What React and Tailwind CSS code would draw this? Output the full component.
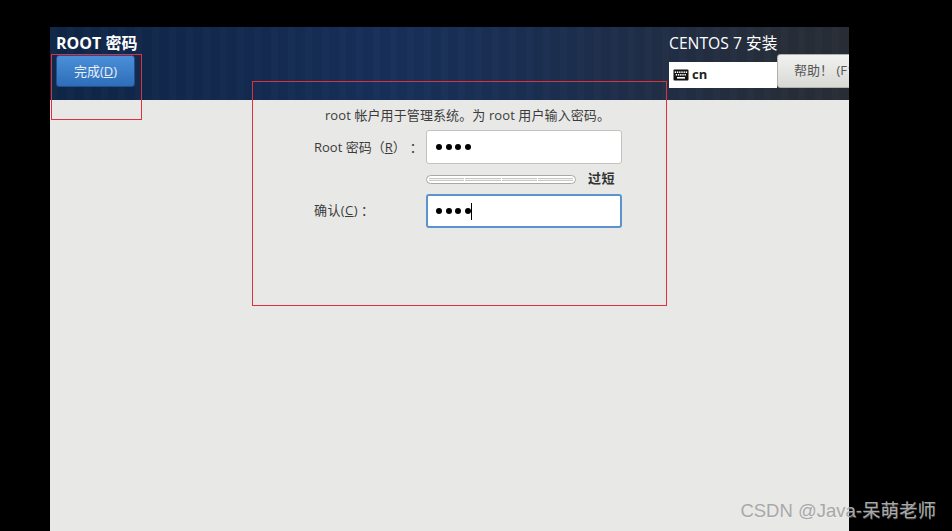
import React from "react";

const font = { fontFamily: '"Open Sans", "Noto Sans", "Noto Sans CJK SC", sans-serif' };

function Keyboard() {
  return (
    <svg width="16" height="12" viewBox="0 0 16 12" className="shrink-0">
      <rect x="0.5" y="0.5" width="15" height="11" rx="1" fill="#111" />
      {[2, 4.2, 6.4, 8.6, 10.8, 13].map((x) => (
        <rect key={x} x={x - 0.3} y="2.4" width="1.4" height="1.6" fill="#fff" />
      ))}
      {[3, 5.2, 7.4, 9.6, 11.8].map((x) => (
        <rect key={x} x={x - 0.3} y="5" width="1.4" height="1.6" fill="#fff" />
      ))}
      <rect x="4" y="8" width="8" height="1.6" fill="#fff" />
    </svg>
  );
}

function Dots({ caret }) {
  return (
    <div className={caret ? "flex items-center gap-[3.5px] h-full pl-[8px]" : "flex items-center gap-[3.5px] h-full pl-[9px]"}>
      {[0, 1, 2, 3].map((i) => (
        <span key={i} className="w-[6px] h-[6px] rounded-full bg-black" />
      ))}
      {caret && <span className="w-px h-[17px] bg-black -ml-[3px]" />}
    </div>
  );
}

export default function App() {
  return (
    <div className="relative w-[952px] h-[531px] overflow-hidden bg-black pt-[27px] pl-[50px] [text-spacing-trim:space-all]" style={font}>
      <div className="w-[799px] h-[504px] bg-[#e8e8e6] overflow-hidden">
        <header className="h-[73px] flex justify-between overflow-hidden bg-[repeating-linear-gradient(90deg,rgba(255,255,255,0.012)_0px,rgba(255,255,255,0.012)_7px,rgba(0,0,0,0.02)_7px,rgba(0,0,0,0.02)_17px),linear-gradient(90deg,#0f2647_0%,#132a50_25%,#17305a_42%,#1a2f52_60%,#212e45_78%,#272e39_92%,#282d36_100%)]">
          <div className="pl-[6px] pt-[6px]">
            <div className="text-[16px] leading-[21px] font-bold text-white whitespace-nowrap">ROOT 密码</div>
            <button className="mt-[1px] w-[79px] h-[32px] block rounded-[3px] border border-[#1f4f8f] bg-[linear-gradient(180deg,#4a90d9_0%,#2f6db8_100%)] text-[#e8f0fa] text-[13px] leading-none">
              完成(<span className="underline">D</span>)
            </button>
          </div>
          <div className="w-[180px] shrink-0 pt-[6px]">
            <div className="text-[15.7px] leading-[21px] text-white whitespace-nowrap">CENTOS 7 安装</div>
            <div className="flex items-start">
              <div className="mt-[8px] w-[108px] h-[26px] bg-white flex items-center gap-[3px] pl-[4px] shrink-0">
                <Keyboard />
                <span className="text-[13px] font-bold text-[#222]">cn</span>
              </div>
              <button className="w-[100px] h-[34px] shrink-0 rounded-[3px] border border-[#b0b0ac] bg-[linear-gradient(180deg,#f2f2f0_0%,#d8d8d5_100%)] text-[#555] text-[13px] text-left pl-[16px] whitespace-nowrap">
                帮助！ (F1)
              </button>
            </div>
          </div>
        </header>
        <main className="w-[414px] ml-[202px] pt-[5px] text-[#3c3c3c] text-[13px]">
          <p className="text-center leading-[20px] whitespace-nowrap pl-[17px] tracking-[0.1px]">root 帐户用于管理系统。为 root 用户输入密码。</p>
          <div className="mt-[5px] pl-[62px] grid grid-cols-[112px_196px] items-center">
            <label className="whitespace-nowrap pt-[1px]">Root 密码（<span className="underline">R</span>）<span className="ml-[4px]">：</span></label>
            <div className="h-[34px] bg-white border border-[#c2c2be] rounded-[3px]"><Dots /></div>
            <div />
            <div className="flex items-center h-[30px]">
              <div className="w-[150px] h-[9px] rounded-full border border-[#a8a8a4] bg-white flex gap-px p-[2px]">
                <span className="flex-1 bg-[#f4f4f2] border-y border-[#c8c8c4]" />
                <span className="flex-1 bg-[#f4f4f2] border-y border-[#c8c8c4]" />
                <span className="flex-1 bg-[#f4f4f2] border-y border-[#c8c8c4]" />
                <span className="flex-1 bg-[#f4f4f2] border-y border-[#c8c8c4]" />
              </div>
              <span className="ml-[12px] font-bold text-[#333] whitespace-nowrap tracking-[0.5px]">过短</span>
            </div>
            <label className="whitespace-nowrap tracking-[0.4px]">确认(<span className="underline">C</span>)<span className="ml-[3px]">：</span></label>
            <div className="h-[34px] bg-white border-2 border-[#5b93cf] rounded-[3px]"><Dots caret /></div>
          </div>
        </main>
      </div>
      <div className="absolute left-[51px] top-[54px] w-[91px] h-[66px] border border-[#e0303f]" />
      <div className="absolute left-[252px] top-[81px] w-[415px] h-[225px] border border-[#e0303f]" />
      <div className="absolute right-[16px] bottom-[8px] text-[18.5px] leading-[24px] text-[#a8a8a8] whitespace-nowrap" style={{ fontFamily: '"Liberation Sans","Noto Sans CJK SC",sans-serif', textShadow: "0.5px 0.5px 0 rgba(255,255,255,0.3)" }}>
        CSDN @Java-呆萌老师
      </div>
    </div>
  );
}
